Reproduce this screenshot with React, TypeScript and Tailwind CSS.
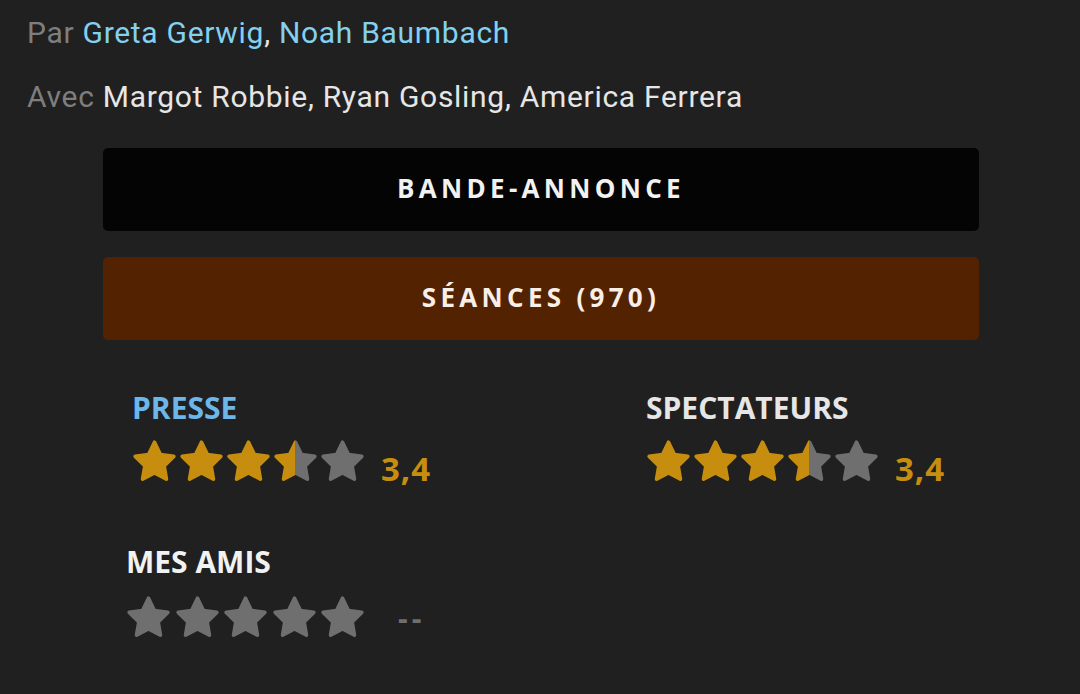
import React from "react";

const GOLD = "#c68d0e";
const GRAY = "#6f6f6f";
const STAR_D =
  "M12 2.6l2.9 5.95 6.55.95-4.74 4.62 1.12 6.52L12 17.56l-5.83 3.08 1.12-6.52L2.55 9.5l6.55-.95z";

function Star({ fill, id }: { fill: number; id: string }) {
  const paint = fill >= 1 ? GOLD : fill <= 0 ? GRAY : `url(#${id})`;
  return (
    <div className="w-[47px] h-[47px] shrink-0 flex items-center justify-center">
      <svg width="47" height="47" viewBox="0.5 0.5 23 23" className="block">
        <defs>
          <linearGradient id={id} gradientUnits="userSpaceOnUse" x1="1.5" x2="22.5" y1="0" y2="0">
            <stop offset={`${fill * 100}%`} stopColor={GOLD} />
            <stop offset={`${fill * 100}%`} stopColor={GRAY} />
          </linearGradient>
        </defs>
        <path
          d={STAR_D}
          fill={paint}
          stroke={paint}
          strokeWidth="1.8"
          strokeLinejoin="round"
        />
      </svg>
    </div>
  );
}

const heading =
  "text-[30px] leading-[30px] font-bold font-['Open_Sans',sans-serif]";

const rating =
  "mt-[14px] ml-[15px] text-[33px] leading-[33px] font-bold tracking-[1px] text-[#c68d0e] font-['Open_Sans',sans-serif]";

const btn =
  "h-[83px] rounded-[5px] flex items-center justify-center pb-[3px] text-[26px] font-bold tracking-[4.3px] font-['Open_Sans',sans-serif]";

export default function App() {
  return (
    <div className="w-[1080px] h-[694px] bg-[#202020] overflow-hidden font-['Roboto',sans-serif]">
      <div className="pt-[1px] pl-[27px] text-[30px] leading-[64px] tracking-[0.7px]">
        <div>
          <span className="text-[#7e7e7e]">Par </span>
          <span className="text-[#83d0ef]">Greta Gerwig</span>
          <span className="text-[#e6e6e6]">, </span>
          <span className="text-[#83d0ef]">Noah Baumbach</span>
        </div>
        <div>
          <span className="text-[#7e7e7e]">Avec </span>
          <span className="text-[#e6e6e6]">Margot Robbie, Ryan Gosling, America Ferrera</span>
        </div>
      </div>

      <div className="mt-[19px] ml-[103px] w-[876px] flex flex-col gap-[26px]">
        <div className={`${btn} bg-[#040404] text-[#f2f2f2]`}>BANDE-ANNONCE</div>
        <div className={`${btn} bg-[#532200] text-[#f7efe8]`}>SÉANCES (970)</div>
      </div>

      <div className="mt-[53px] pl-[131px] grid grid-cols-[514px_1fr]">
        <div className="flex flex-col">
          <div className={`${heading} text-[#6cb6ea] pl-[1px]`}>PRESSE</div>
          <div className="mt-[15px] flex items-start">
            <Star fill={1} id="p0" />
            <Star fill={1} id="p1" />
            <Star fill={1} id="p2" />
            <Star fill={0.5} id="p3" />
            <Star fill={0} id="p4" />
            <span className={rating}>3,4</span>
          </div>
        </div>
        <div className="flex flex-col">
          <div className={`${heading} text-[#e6e6e6] pl-[1px]`}>SPECTATEURS</div>
          <div className="mt-[15px] flex items-start">
            <Star fill={1} id="s0" />
            <Star fill={1} id="s1" />
            <Star fill={1} id="s2" />
            <Star fill={0.5} id="s3" />
            <Star fill={0} id="s4" />
            <span className={rating}>3,4</span>
          </div>
        </div>
      </div>

      <div className="mt-[62px] pl-[125px] flex flex-col">
        <div className={`${heading} text-[#f2f2f2] pl-[1px]`}>MES AMIS</div>
        <div className="mt-[17px] flex items-center">
          <div className="flex items-center gap-[1.5px]">
            <Star fill={0} id="a0" />
            <Star fill={0} id="a1" />
            <Star fill={0} id="a2" />
            <Star fill={0} id="a3" />
            <Star fill={0} id="a4" />
          </div>
          <span className="ml-[32px] text-[30px] font-bold text-[#6f6f6f] tracking-[4px] font-['Open_Sans',sans-serif]">
            --
          </span>
        </div>
      </div>
    </div>
  );
}
